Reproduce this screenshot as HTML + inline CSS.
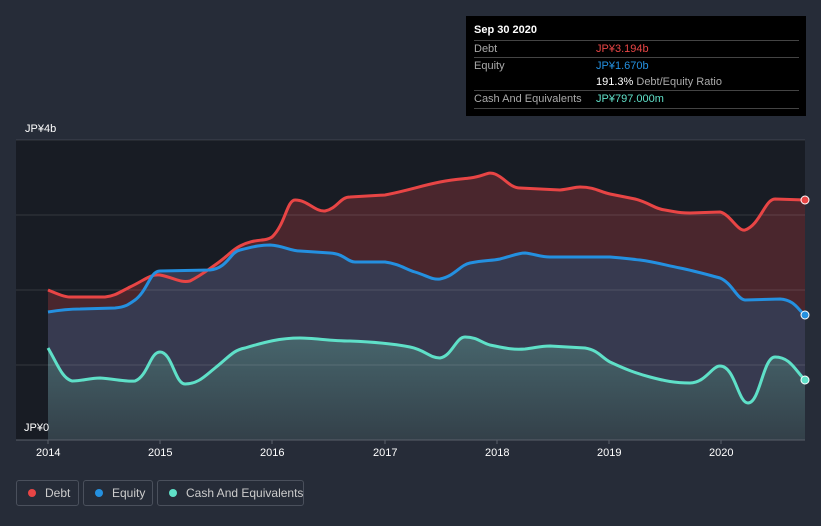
<!DOCTYPE html><html><head><style>
body{margin:0;width:821px;height:526px;background:#262c38;font-family:"Liberation Sans",sans-serif;position:relative;overflow:hidden}
.t{position:absolute;color:#fff;font-size:11px}
.tip{position:absolute;left:466px;top:16px;width:340px;height:100px;background:#000}
.tip .r{position:absolute;left:8px;width:325px;border-top:1px solid #444;font-size:11px;color:#aaa}
.leg{position:absolute;top:480px;height:26px;border:1px solid #4a505c;border-radius:3px;color:#ccc;font-size:12px;line-height:24px;box-sizing:border-box;white-space:nowrap;overflow:hidden}
.leg i{display:inline-block;width:8px;height:8px;border-radius:50%;margin:0 9px 0 11px;vertical-align:0}
</style></head><body>
<svg width="821" height="526" style="position:absolute;left:0;top:0">
<defs><linearGradient id="c" x1="0" y1="0" x2="0" y2="1"><stop offset="0" stop-color="#47656c"/><stop offset="1" stop-color="#334049"/></linearGradient></defs>
<rect x="16" y="140" width="789" height="300" fill="#181c24"/>
<path d="M48,290 C60,295 65,297 70,297 L105,297 C115,296 120,292 130,287 C145,280 150,274 160,275 C175,278 180,283 190,281 C200,276 205,272 215,265 C228,256 232,250 240,246 C255,238 265,242 272,237 C285,225 287,200 295,200 C308,200 315,212 325,211 C338,208 340,197 350,197 L385,195 C410,190 420,186 440,182 C455,179 462,179 470,178 C485,176 488,171 495,174 C505,178 510,188 520,188 L560,190 C570,189 575,187 580,187 C595,187 600,192 610,194 C625,197 630,198 635,199 C650,203 655,209 665,210 C680,213 685,213 690,213 L720,212 C730,214 738,232 745,230 C760,225 765,199 775,199 L805,200 L805,440 L48,440 Z" fill="#4a262d"/>
<path d="M48,312 C60,310 70,309 80,309 L115,308 C125,307 128,305 135,300 C148,290 150,271 160,271 L210,270 C228,268 230,252 240,250 C255,246 262,245 270,245 C285,246 290,251 300,251 L330,253 C345,254 347,262 355,262 L385,262 C400,264 405,269 415,272 C428,276 432,280 440,279 C455,276 460,265 470,263 C485,260 490,261 500,259 C512,256 518,253 525,253 C535,254 540,257 550,257 L610,257 C625,258 630,259 640,260 C655,262 665,265 680,268 C695,271 705,274 720,278 C732,283 737,299 745,300 L780,299 C795,300 798,310 805,315 L805,440 L48,440 Z" fill="#373a50"/>
<path d="M48,348 C58,365 62,378 72,381 C82,381 90,378 100,378 C115,379 125,382 135,381 C148,376 150,352 160,352 C172,352 175,384 185,384 C198,384 205,376 215,368 C228,358 233,350 245,348 C265,342 280,338 300,338 C315,338 330,341 350,341 C375,342 395,344 410,347 C425,350 430,358 440,358 C452,356 456,337 465,337 C477,337 482,343 490,345 C505,348 512,350 525,349 C535,348 540,346 550,346 L585,348 C598,350 602,358 610,362 C625,369 635,373 650,377 C665,381 675,383 690,383 C705,383 712,366 720,366 C735,366 738,403 748,403 C760,403 763,357 775,357 C790,357 795,370 805,380 L805,440 L48,440 Z" fill="url(#c)"/>
<g stroke="#ffffff" stroke-opacity="0.12"><line x1="16" y1="140" x2="805" y2="140"/><line x1="16" y1="215" x2="805" y2="215"/><line x1="16" y1="290" x2="805" y2="290"/><line x1="16" y1="365" x2="805" y2="365"/></g>
<line x1="16" y1="440" x2="805" y2="440" stroke="#5a606a"/>
<g stroke="#5a606a"><line x1="48" y1="440" x2="48" y2="444"/><line x1="160" y1="440" x2="160" y2="444"/><line x1="272" y1="440" x2="272" y2="444"/><line x1="385" y1="440" x2="385" y2="444"/><line x1="497" y1="440" x2="497" y2="444"/><line x1="609" y1="440" x2="609" y2="444"/><line x1="721" y1="440" x2="721" y2="444"/></g>
<g fill="none" stroke-width="3">
<path stroke="#e84545" d="M48,290 C60,295 65,297 70,297 L105,297 C115,296 120,292 130,287 C145,280 150,274 160,275 C175,278 180,283 190,281 C200,276 205,272 215,265 C228,256 232,250 240,246 C255,238 265,242 272,237 C285,225 287,200 295,200 C308,200 315,212 325,211 C338,208 340,197 350,197 L385,195 C410,190 420,186 440,182 C455,179 462,179 470,178 C485,176 488,171 495,174 C505,178 510,188 520,188 L560,190 C570,189 575,187 580,187 C595,187 600,192 610,194 C625,197 630,198 635,199 C650,203 655,209 665,210 C680,213 685,213 690,213 L720,212 C730,214 738,232 745,230 C760,225 765,199 775,199 L805,200"/>
<path stroke="#2490e0" d="M48,312 C60,310 70,309 80,309 L115,308 C125,307 128,305 135,300 C148,290 150,271 160,271 L210,270 C228,268 230,252 240,250 C255,246 262,245 270,245 C285,246 290,251 300,251 L330,253 C345,254 347,262 355,262 L385,262 C400,264 405,269 415,272 C428,276 432,280 440,279 C455,276 460,265 470,263 C485,260 490,261 500,259 C512,256 518,253 525,253 C535,254 540,257 550,257 L610,257 C625,258 630,259 640,260 C655,262 665,265 680,268 C695,271 705,274 720,278 C732,283 737,299 745,300 L780,299 C795,300 798,310 805,315"/>
<path stroke="#5fe0c8" d="M48,348 C58,365 62,378 72,381 C82,381 90,378 100,378 C115,379 125,382 135,381 C148,376 150,352 160,352 C172,352 175,384 185,384 C198,384 205,376 215,368 C228,358 233,350 245,348 C265,342 280,338 300,338 C315,338 330,341 350,341 C375,342 395,344 410,347 C425,350 430,358 440,358 C452,356 456,337 465,337 C477,337 482,343 490,345 C505,348 512,350 525,349 C535,348 540,346 550,346 L585,348 C598,350 602,358 610,362 C625,369 635,373 650,377 C665,381 675,383 690,383 C705,383 712,366 720,366 C735,366 738,403 748,403 C760,403 763,357 775,357 C790,357 795,370 805,380"/>
</g>
<circle cx="805" cy="200" r="4" fill="#e84545" stroke="#fff" stroke-width="1"/>
<circle cx="805" cy="315" r="4" fill="#2490e0" stroke="#fff" stroke-width="1"/>
<circle cx="805" cy="380" r="4" fill="#5fe0c8" stroke="#fff" stroke-width="1"/>
</svg>
<div class="t" style="left:25px;top:123px">JP¥4b</div>
<div class="t" style="left:24px;top:422px">JP¥0</div>
<div class="t" style="left:36px;top:447px">2014</div><div class="t" style="left:148px;top:447px">2015</div><div class="t" style="left:260px;top:447px">2016</div><div class="t" style="left:373px;top:447px">2017</div><div class="t" style="left:485px;top:447px">2018</div><div class="t" style="left:597px;top:447px">2019</div><div class="t" style="left:709px;top:447px">2020</div>
<div class="tip">
<div style="position:absolute;left:8px;top:8px;color:#fff;font-weight:bold;font-size:11px">Sep 30 2020</div>
<div class="r" style="top:24px;height:16px;line-height:16px">Debt<span style="position:absolute;left:122px;color:#e84545">JP¥3.194b</span></div>
<div class="r" style="top:41px;height:33px;line-height:16px">Equity<span style="position:absolute;left:122px;color:#2490e0">JP¥1.670b</span><br><span style="position:absolute;left:122px;top:16px"><b style="color:#fff;font-weight:normal">191.3%</b> Debt/Equity Ratio</span></div>
<div class="r" style="top:74px;height:17px;line-height:16px;border-bottom:1px solid #444">Cash And Equivalents<span style="position:absolute;left:122px;color:#5fe0c8">JP¥797.000m</span></div>
</div>
<div class="leg" style="left:16px;width:63px"><i style="background:#e84545"></i>Debt</div>
<div class="leg" style="left:83px;width:70px"><i style="background:#2490e0"></i>Equity</div>
<div class="leg" style="left:157px;width:147px"><i style="background:#5fe0c8"></i>Cash And Equivalents</div>
</body></html>
